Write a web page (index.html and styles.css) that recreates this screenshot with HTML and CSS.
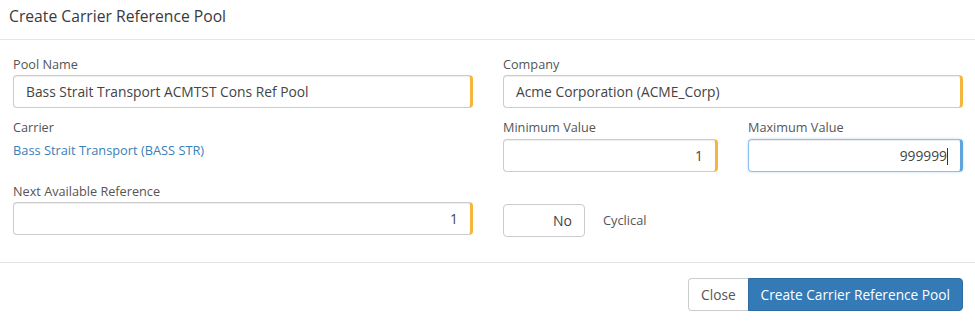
FILE: index.html
```html
<!DOCTYPE html>
<html>
<head>
<meta charset="utf-8">
<link rel="stylesheet" href="styles.css">
</head>
<body>
<div class="modal">
  <div class="modal-header">
    <h4 class="modal-title">Create Carrier Reference Pool</h4>
  </div>
  <div class="modal-body">
    <div class="form-grid">
      <div class="group">
        <label class="label">Pool Name</label>
        <div class="input required">Bass Strait Transport ACMTST Cons Ref Pool</div>
      </div>
      <div class="group">
        <label class="label">Company</label>
        <div class="input required">Acme Corporation (ACME_Corp)</div>
      </div>
      <div class="group">
        <label class="label">Carrier</label>
        <a class="link">Bass Strait Transport (BASS STR)</a>
      </div>
      <div class="pair">
        <div class="group">
          <label class="label">Minimum Value</label>
          <div class="input required num">1</div>
        </div>
        <div class="group">
          <label class="label">Maximum Value</label>
          <div class="input focused num">999999<span class="caret"></span></div>
        </div>
      </div>
      <div class="group">
        <label class="label">Next Available Reference</label>
        <div class="input required num">1</div>
      </div>
      <div class="toggle-row">
        <div class="toggle">No</div>
        <span class="toggle-label">Cyclical</span>
      </div>
    </div>
  </div>
  <div class="modal-footer">
    <div class="btn-group">
      <button class="btn btn-default">Close</button>
      <button class="btn btn-primary">Create Carrier Reference Pool</button>
    </div>
  </div>
</div>
</body>
</html>
```

FILE: styles.css
```css
html, body {
  margin: 0;
  padding: 0;
  background: #fff;
}
body {
  font-family: "Open Sans", "Noto Sans", sans-serif;
  color: #333;
}
.modal {
  width: 975px;
}
.modal-header {
  border-bottom: 1px solid #e5e5e5;
  padding: 5px 0 0 9px;
  box-sizing: border-box;
  height: 40px;
}
.modal-title {
  margin: 0;
  font-size: 15.7px;
  font-weight: 400;
  line-height: 22px;
  color: #3a3a3a;
}
.modal-body {
  padding: 15px 12px 25px 13px;
}
.form-grid {
  display: grid;
  grid-template-columns: 460px 460px;
  column-gap: 30px;
  row-gap: 10px;
}
.group {
  display: flex;
  flex-direction: column;
}
.label {
  font-size: 12.7px;
  line-height: 18px;
  color: #555;
  margin-bottom: 2px;
}
.pair .label {
  margin-bottom: 3px;
}
.input {
  height: 33px;
  box-sizing: border-box;
  border: 1px solid #ccc;
  border-radius: 4px;
  box-shadow: inset 0 1px 1px rgba(0,0,0,.075);
  padding: 0 12px;
  font-size: 13.8px;
  line-height: 31px;
  color: #444;
  white-space: nowrap;
}
.input.required {
  border-right: 3px solid #f4b63d;
}
.input.focused {
  border-color: #8cc0ec;
  border-right: 3px solid #5ea3dc;
  box-shadow: inset 0 1px 1px rgba(0,0,0,.075), 0 0 3px rgba(102,175,233,.4);
}
.num {
  text-align: right;
  padding-right: 12px;
}
.caret {
  display: inline-block;
  width: 1px;
  height: 17px;
  background: #333;
  vertical-align: -4px;
}
.link {
  font-size: 12.8px;
  line-height: 18px;
  color: #3a7fb8;
  margin-top: 3px;
  text-decoration: none;
}
.pair {
  display: grid;
  grid-template-columns: 215px 215px;
  column-gap: 30px;
}
.toggle-row {
  display: flex;
  align-items: center;
  margin-top: 22px;
  align-self: start;
}
.toggle {
  width: 82px;
  height: 33px;
  box-sizing: border-box;
  border: 1px solid #ccc;
  border-radius: 4px;
  text-align: right;
  padding-right: 12px;
  font-size: 14px;
  line-height: 31px;
  color: #444;
}
.toggle-label {
  margin-left: 18px;
  font-size: 12.8px;
  color: #555;
  margin-top: -2px;
}
.modal-footer {
  border-top: 1px solid #e5e5e5;
  padding: 15px 12px 0 0;
  display: flex;
  justify-content: flex-end;
}
.btn-group {
  display: flex;
}
.btn {
  font-family: "Open Sans", "Noto Sans", sans-serif;
  font-size: 13.7px;
  height: 33px;
  line-height: 20px;
  padding: 6px 12px;
  border: 1px solid #ccc;
  margin: 0;
  box-sizing: border-box;
  cursor: pointer;
}
.btn-default {
  background: #fff;
  color: #555;
  border-radius: 4px 0 0 4px;
  border-right: none;
}
.btn-primary {
  background: #337ab7;
  border-color: #2e6da4;
  color: #fff;
  border-radius: 0 4px 4px 0;
}
```
